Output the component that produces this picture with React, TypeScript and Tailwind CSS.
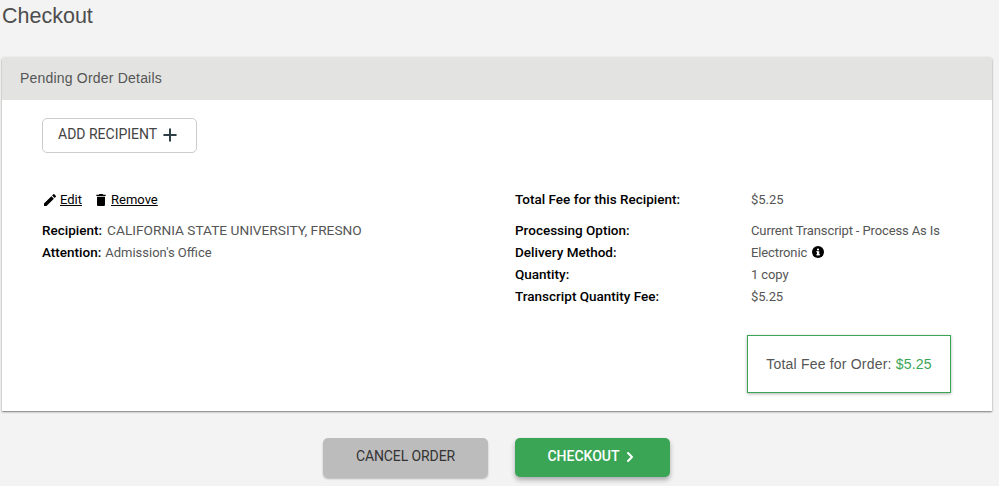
import { ChevronRight, Plus } from "lucide-react"

const details = [
  ["Processing Option:", "Current Transcript - Process As Is"],
  ["Delivery Method:", "Electronic"],
  ["Quantity:", "1 copy"],
  ["Transcript Quantity Fee:", "$5.25"],
]

function PencilIcon() {
  return (
    <svg viewBox="0 0 24 24" className="w-4 h-4 fill-black">
      <path d="M3 17.25V21h3.75L17.81 9.94l-3.75-3.75L3 17.25zM20.71 7.04a1 1 0 0 0 0-1.41l-2.34-2.34a1 1 0 0 0-1.41 0l-1.83 1.83 3.75 3.75 1.83-1.83z" />
    </svg>
  )
}

function TrashIcon() {
  return (
    <svg viewBox="0 0 24 24" className="w-4 h-4 fill-black">
      <path d="M6 19c0 1.1.9 2 2 2h8c1.1 0 2-.9 2-2V7H6v12zM19 4h-3.5l-1-1h-5l-1 1H5v2h14V4z" />
    </svg>
  )
}

function InfoIcon() {
  return (
    <svg viewBox="0 0 24 24" className="w-[12px] h-[12px] ml-[5px] self-center">
      <circle cx="12" cy="12" r="12" fill="#000" />
      <rect x="10" y="10.5" width="4.5" height="8" fill="#fff" />
      <rect x="8.5" y="10.5" width="4" height="2" fill="#fff" />
      <rect x="8.5" y="16.5" width="7.5" height="2" fill="#fff" />
      <circle cx="12" cy="7" r="2.2" fill="#fff" />
    </svg>
  )
}

export default function App() {
  return (
    <div className="w-[999px] h-[486px] overflow-hidden bg-[#f3f3f3] font-['Roboto',sans-serif] text-[13px] text-[#555]">
      <h1 className="h-[57px] pl-[2px] pt-[1px] text-[21.5px] leading-[30px] font-['Liberation_Sans',sans-serif] text-[#4d4d4d]">Checkout</h1>

      <div className="ml-[2px] w-[990px] h-[354px] bg-white rounded-t-[3px] shadow-[0_1px_2px_rgba(0,0,0,0.5)]">
        <div className="h-[43px] bg-[#e3e3e1] pl-[18px] flex items-center rounded-t-[3px] font-['Liberation_Sans',sans-serif] text-[14px] tracking-[0.2px] text-[#555]">
          Pending Order Details
        </div>

        <div className="pl-[40px] pt-[18px]">
          <button className="h-[35px] w-[155px] flex items-center pl-[15px] pb-[2px] border border-[#ccc] rounded-[5px] text-[14px] text-[#444] bg-white">
            ADD RECIPIENT
            <Plus className="w-[20px] h-[20px] ml-[3px] text-[#2f3f48]" strokeWidth={2.4} />
          </button>

          <div className="flex mt-[38px]">
            <div className="w-[473px]">
              <div className="flex items-center h-[17px] text-black">
                <PencilIcon />
                <a className="underline ml-[2px]">Edit</a>
                <span className="ml-[11px]"><TrashIcon /></span>
                <a className="underline ml-[2px]">Remove</a>
              </div>
              <div className="mt-[11px]">
                <div className="flex items-baseline h-[22px] leading-[22px]">
                  <span className="font-medium text-[13.5px] text-black">Recipient:</span>
                  <span className="ml-[5px] text-[13.7px]">CALIFORNIA STATE UNIVERSITY, FRESNO</span>
                </div>
                <div className="flex items-baseline h-[22px] leading-[22px]">
                  <span className="font-medium text-[13.5px] text-black">Attention:</span>
                  <span className="ml-[4px]">Admission's Office</span>
                </div>
              </div>
            </div>

            <div className="flex-1">
              <div className="flex h-[17px] items-baseline leading-[17px]">
                <span className="w-[236px] font-medium text-[13.5px] text-black">Total Fee for this Recipient:</span>
                <span>$5.25</span>
              </div>
              <div className="mt-[11px]">
                {details.map(([label, value]) => (
                  <div key={label} className="flex items-baseline h-[22px] leading-[22px]">
                    <span className="w-[236px] font-medium text-[13.5px] text-black">{label}</span>
                    <span className="tracking-[-0.12px]">{value}</span>
                    {label === "Delivery Method:" && <InfoIcon />}
                  </div>
                ))}
              </div>
              <div className="ml-[232px] mt-[28px] w-[204px] h-[58px] flex items-center justify-center border border-[#3aa655] bg-white shadow-[0_1px_3px_rgba(0,0,0,0.3)] font-['Liberation_Sans',sans-serif] text-[14px] tracking-[0.2px]">
                <span>Total Fee for Order: <span className="text-[#3aa655]">$5.25</span></span>
              </div>
            </div>
          </div>
        </div>
      </div>

      <div className="flex justify-center gap-[27px] mt-[27px] pr-[6px]">
        <button className="w-[165px] h-[39px] rounded-[5px] bg-[#bcbcbc] text-[14px] tracking-[-0.1px] pb-[2px] text-[#333] shadow-[0_2px_2px_rgba(0,0,0,0.25)]">CANCEL ORDER</button>
        <button className="w-[155px] h-[39px] rounded-[5px] bg-[#3aa655] text-[14px] pb-[2px] text-white font-medium flex items-center justify-center shadow-[0_3px_5px_rgba(0,0,0,0.3)]">
          CHECKOUT
          <ChevronRight className="w-[16px] h-[16px] ml-[2px]" strokeWidth={3} />
        </button>
      </div>
    </div>
  )
}
